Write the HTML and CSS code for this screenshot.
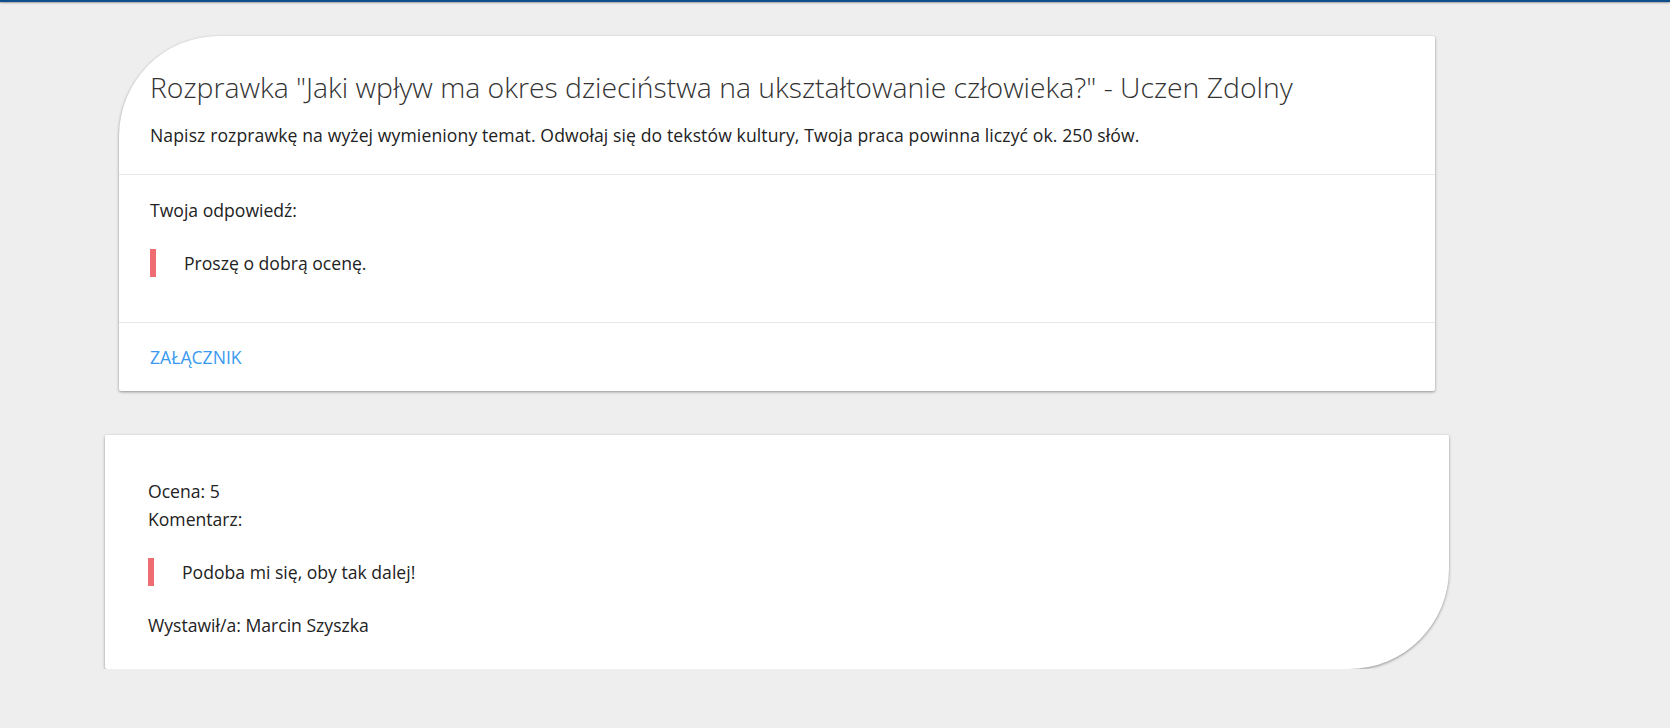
FILE: index.html
```html
<!DOCTYPE html>
<html lang="pl">
<head>
<meta charset="utf-8">
<title>Rozprawka</title>
<link rel="stylesheet" href="styles.css">
</head>
<body>
<div class="topbar"></div>
<main class="page">
  <section class="card card-task">
    <header class="task-head">
      <h1 class="task-title">Rozprawka "Jaki wpływ ma okres dzieciństwa na ukształtowanie człowieka?" - Uczen Zdolny</h1>
      <p class="task-desc">Napisz rozprawkę na wyżej wymieniony temat. Odwołaj się do tekstów kultury, Twoja praca powinna liczyć ok. 250 słów.</p>
    </header>
    <div class="task-answer">
      <p class="label">Twoja odpowiedź:</p>
      <blockquote class="quote">Proszę o dobrą ocenę.</blockquote>
    </div>
    <footer class="task-actions">
      <a class="link-btn" href="#">ZAŁĄCZNIK</a>
    </footer>
  </section>
  <section class="card card-grade">
    <p class="line">Ocena: 5</p>
    <p class="line">Komentarz:</p>
    <blockquote class="quote quote-grade">Podoba mi się, oby tak dalej!</blockquote>
    <p class="line">Wystawił/a: Marcin Szyszka</p>
  </section>
</main>
</body>
</html>
```

FILE: styles.css
```css
html, body {
  margin: 0;
  padding: 0;
}
body {
  background: #eeeeee;
  font-family: "Open Sans", "Noto Sans", sans-serif;
  color: #222;
  font-size: 17.6px;
}
.topbar {
  height: 2px;
  background: #0f4e8a;
  box-shadow: 0 1px 2px rgba(0,0,0,0.35);
}
.page {
  width: 1344px;
  padding: 34px 0 0 105px;
}
.card {
  background: #fff;
  box-shadow: 0 1px 3px rgba(0,0,0,0.4);
}
.card-task {
  margin: 0 14px;
  border-radius: 100px 2px 2px 2px;
}
.task-head {
  padding: 31px 31px 25px;
  border-bottom: 1px solid #e6e6e6;
}
.task-title {
  margin: 0;
  font-weight: 300;
  font-size: 28.35px;
  line-height: 40px;
  color: #333;
}
.task-desc {
  margin: 14px 0 0;
  line-height: 28px;
  letter-spacing: 0.1px;
}
.task-answer {
  padding: 21px 31px 45px;
  border-bottom: 1px solid #e6e6e6;
}
.label {
  margin: 0;
  line-height: 28px;
}
.quote {
  margin: 25px 0 0;
  border-left: 6px solid #f06c73;
  padding: 0 0 0 28px;
  line-height: 28px;
}
.task-actions {
  padding: 20px 31px 20px;
  line-height: 28px;
}
.link-btn {
  color: #3a9af0;
  text-decoration: none;
}
.card-grade {
  margin-top: 44px;
  border-radius: 2px 2px 100px 2px;
  padding: 42px 43px 30px;
}
.line {
  margin: 0;
  line-height: 28px;
}
.quote-grade {
  margin: 25px 0 25px;
}
```
